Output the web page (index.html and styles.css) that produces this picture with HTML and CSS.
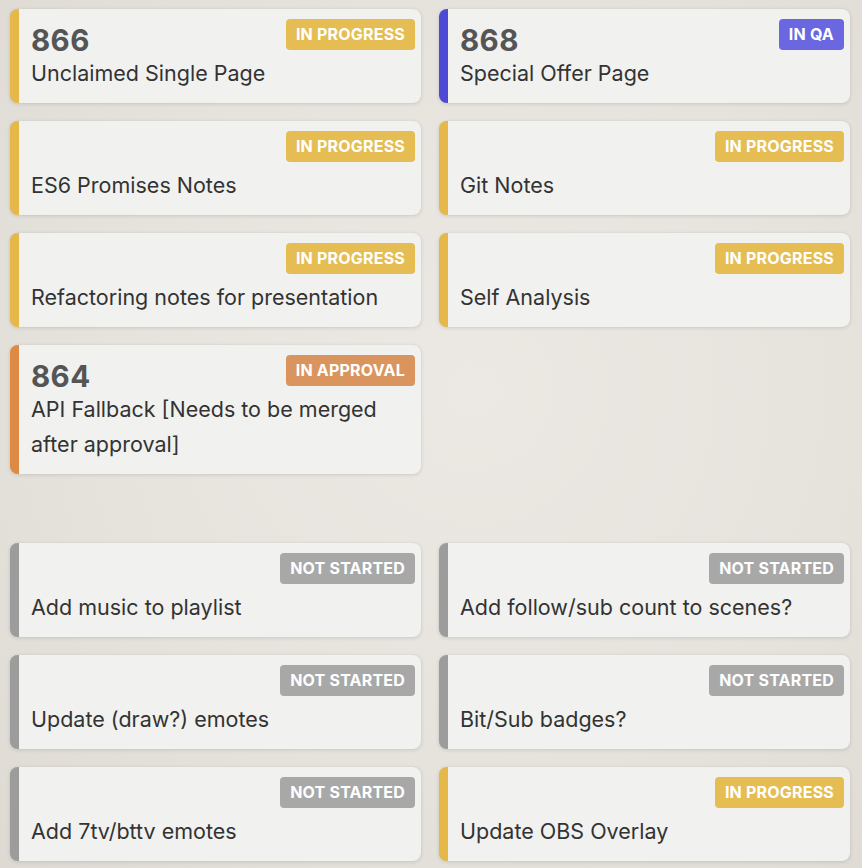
FILE: index.html
```html
<!DOCTYPE html>
<html>
<head>
<meta charset="utf-8">
<link rel="stylesheet" href="styles.css">
</head>
<body>
<main class="board">
  <section class="group">
    <article class="card progress">
      <div class="head"><span class="num">866</span><span class="badge">IN PROGRESS</span></div>
      <div class="title">Unclaimed Single Page</div>
    </article>
    <article class="card qa">
      <div class="head"><span class="num">868</span><span class="badge">IN QA</span></div>
      <div class="title">Special Offer Page</div>
    </article>
    <article class="card progress">
      <div class="head"><span class="num"></span><span class="badge">IN PROGRESS</span></div>
      <div class="title">ES6 Promises Notes</div>
    </article>
    <article class="card progress">
      <div class="head"><span class="num"></span><span class="badge">IN PROGRESS</span></div>
      <div class="title">Git Notes</div>
    </article>
    <article class="card progress">
      <div class="head"><span class="num"></span><span class="badge">IN PROGRESS</span></div>
      <div class="title">Refactoring notes for presentation</div>
    </article>
    <article class="card progress">
      <div class="head"><span class="num"></span><span class="badge">IN PROGRESS</span></div>
      <div class="title">Self Analysis</div>
    </article>
    <article class="card approval">
      <div class="head"><span class="num">864</span><span class="badge">IN APPROVAL</span></div>
      <div class="title">API Fallback [Needs to be merged after approval]</div>
    </article>
  </section>
  <section class="group">
    <article class="card idle">
      <div class="head"><span class="num"></span><span class="badge">NOT STARTED</span></div>
      <div class="title">Add music to playlist</div>
    </article>
    <article class="card idle">
      <div class="head"><span class="num"></span><span class="badge">NOT STARTED</span></div>
      <div class="title">Add follow/sub count to scenes?</div>
    </article>
    <article class="card idle">
      <div class="head"><span class="num"></span><span class="badge">NOT STARTED</span></div>
      <div class="title">Update (draw?) emotes</div>
    </article>
    <article class="card idle">
      <div class="head"><span class="num"></span><span class="badge">NOT STARTED</span></div>
      <div class="title">Bit/Sub badges?</div>
    </article>
    <article class="card idle">
      <div class="head"><span class="num"></span><span class="badge">NOT STARTED</span></div>
      <div class="title">Add 7tv/bttv emotes</div>
    </article>
    <article class="card progress">
      <div class="head"><span class="num"></span><span class="badge">IN PROGRESS</span></div>
      <div class="title">Update OBS Overlay</div>
    </article>
  </section>
</main>
</body>
</html>
```

FILE: styles.css
```css
html, body {
  margin: 0;
  padding: 0;
}
body {
  width: 862px;
  min-height: 868px;
  background: radial-gradient(ellipse at 55% 45%, #ece9e4 0%, #e6e3dd 55%, #dedad3 100%);
  font-family: Inter, "Noto Sans", "Liberation Sans", sans-serif;
  color: #333;
}
.board {
  padding: 9px 12px 0 10px;
  display: flex;
  flex-direction: column;
  gap: 69px;
}
.group {
  display: grid;
  grid-template-columns: 411px 411px;
  column-gap: 18px;
  row-gap: 18px;
  align-items: start;
}
.card {
  background: #f1f1f0;
  border-radius: 8px;
  border-left: 9px solid #e6b84a;
  padding: 10px 6px 12px 12px;
  box-shadow: 0 1px 4px rgba(0, 0, 0, 0.12), 0 0 1px rgba(0, 0, 0, 0.1);
}
.head {
  display: flex;
  justify-content: space-between;
  align-items: flex-start;
  height: 31px;
}
.num {
  font-size: 29.5px;
  font-weight: 700;
  color: #555;
  line-height: 31px;
  margin-top: 6px;
  letter-spacing: 0.4px;
}
.badge {
  height: 31px;
  line-height: 31px;
  padding: 0 10px;
  border-radius: 4px;
  color: #fff;
  font-size: 16px;
  font-weight: 700;
  letter-spacing: 0.2px;
  background: #e5bd52;
}
.title {
  margin-top: 6px;
  font-size: 21.5px;
  line-height: 35px;
  color: #333;
  padding-right: 30px;
}
.progress { border-left-color: #e6b84a; }
.qa { border-left-color: #4e4ad6; }
.qa .badge { background: #6b67e0; }
.approval { border-left-color: #dd8a45; }
.approval .badge { background: #da955e; }
.idle { border-left-color: #9c9c9c; }
.idle .badge { background: #a8a8a8; }
```
